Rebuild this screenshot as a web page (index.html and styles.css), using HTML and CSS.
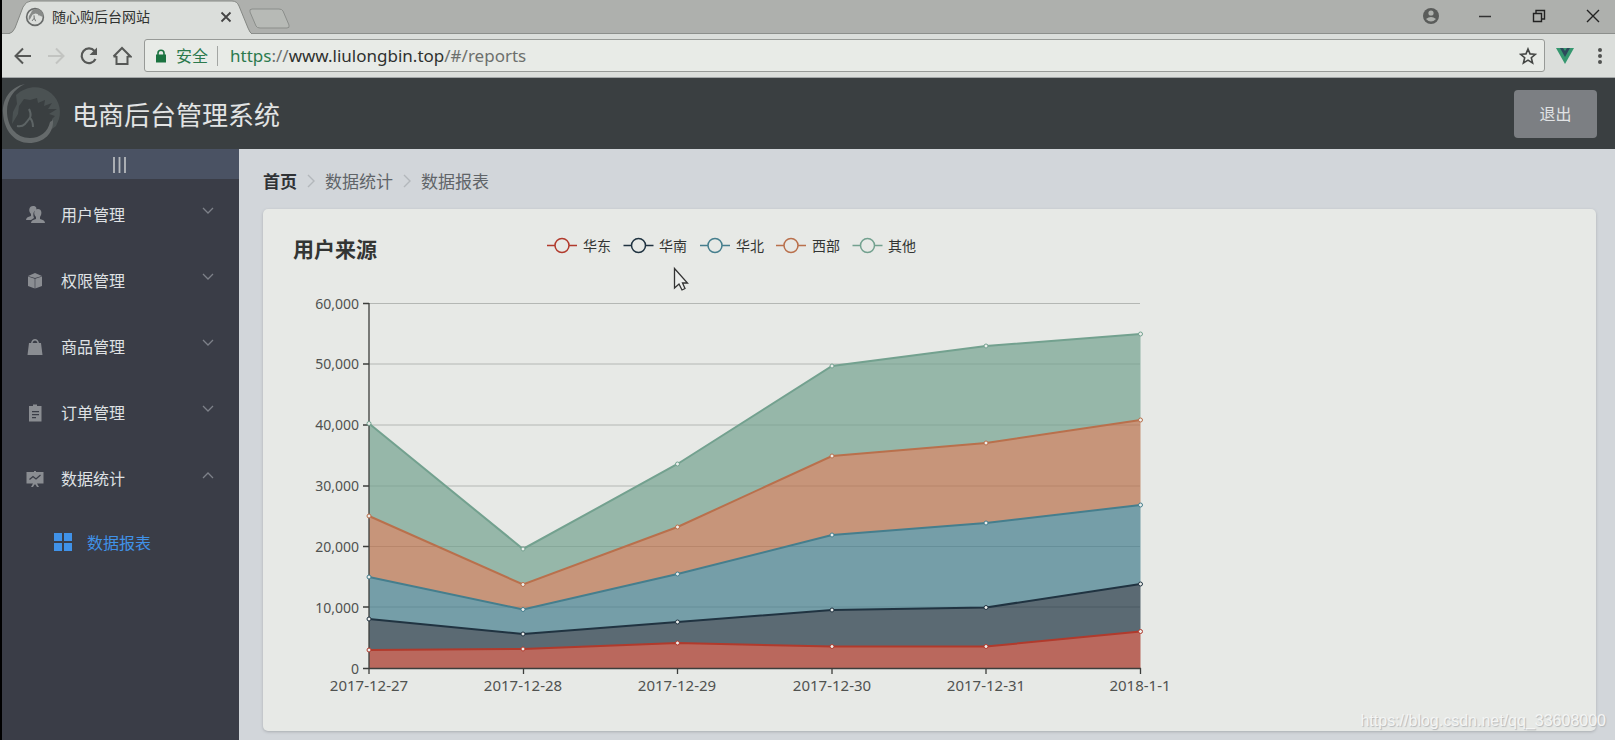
FILE: index.html
```html
<!DOCTYPE html>
<html lang="zh-CN">
<head>
<meta charset="utf-8">
<title>随心购后台网站</title>
<link rel="stylesheet" href="styles.css">
</head>
<body>
<div class="window">
  <div class="tabstrip">
    <div class="tab">
      <svg class="tab-shape" width="244" height="34" viewBox="0 0 244 34" aria-hidden="true"><path d="M0 34 Q5 33 7 28 L15 7 Q18 1 23 1 H224 Q229 1 231 6 L240 28 Q242 33 244 34" fill="#dbdedb" stroke="#858884"/></svg>
      <svg class="favicon" width="20" height="20" viewBox="0 0 60 62" aria-hidden="true"><circle cx="30" cy="31" r="26" fill="none" stroke="#686b6a" stroke-width="5"/><path d="M10 42 L11 29 L18 17 L21 11 C32 2 48 5 54 18 L56 30 L48 29 L44 25 L43 29 L38 22 L31 20 L22 24 L16 36Z" fill="#888b89"/><path d="M27 26 Q31 35 21 43 M28 35 L32 44" fill="none" stroke="#686b6a" stroke-width="3"/></svg>
      <span class="tab-title">随心购后台网站</span>
      <button class="icon-btn" aria-label="关闭标签页"><svg width="12" height="12" viewBox="0 0 12 12"><path d="M1.500 1.500 L10.500 10.500 M10.500 1.500 L1.500 10.500" stroke="#444" stroke-width="1.800"/></svg></button>
    </div>
    <button class="icon-btn new-tab" aria-label="新标签页"><svg width="42" height="22" viewBox="0 0 42 22"><path d="M3 1 H30 Q33 1 34 3 L40 17 Q41 20 38 20 H11 Q8 20 7 18 L1 4 Q0 1 3 1Z" fill="#b7bab6" stroke="#8b8e8b"/></svg></button>
    <div class="window-controls">
      <button class="icon-btn" aria-label="用户"><svg width="18" height="18" viewBox="0 0 18 18"><circle cx="9" cy="9" r="8" fill="#5a5c5a"/><circle cx="9" cy="6" r="2.6" fill="#aeb1ad"/><path d="M4 12 Q9 8 14 12 Q9 17 4 12Z" fill="#aeb1ad"/></svg></button>
      <button class="icon-btn" aria-label="最小化"><svg width="18" height="18" viewBox="0 0 18 18"><path d="M3 9.500 H15" stroke="#333" stroke-width="1.500"/></svg></button>
      <button class="icon-btn" aria-label="还原"><svg width="18" height="18" viewBox="0 0 18 18"><path d="M3.500 6.500 h8 v8 h-8z M6 6 V3.500 h8.500 V12 H12" fill="none" stroke="#222" stroke-width="1.400"/></svg></button>
      <button class="icon-btn" aria-label="关闭"><svg width="18" height="18" viewBox="0 0 18 18"><path d="M3 3 L15 15 M15 3 L3 15" stroke="#222" stroke-width="1.400"/></svg></button>
    </div>
  </div>

  <div class="toolbar">
    <div class="nav-buttons">
      <button class="icon-btn" aria-label="后退"><svg width="20" height="20" viewBox="0 0 20 20"><path d="M18 10 H3 M10 2.500 L2.500 10 L10 17.500" fill="none" stroke="#565856" stroke-width="2"/></svg></button>
      <button class="icon-btn" aria-label="前进"><svg width="20" height="20" viewBox="0 0 20 20"><path d="M2 10 H17 M10 2.500 L17.500 10 L10 17.500" fill="none" stroke="#c2c4c1" stroke-width="2"/></svg></button>
      <button class="icon-btn" aria-label="重新加载"><svg width="20" height="20" viewBox="0 0 20 20"><path d="M16.500 13 A7.300 7.300 0 1 1 15.500 5" fill="none" stroke="#565856" stroke-width="2.200"/><path d="M18 1.500 V9 H10.500Z" fill="#565856"/></svg></button>
      <button class="icon-btn" aria-label="主页"><svg width="20" height="20" viewBox="0 0 20 20"><path d="M4.500 10 V18 H15.500 V10 M1.500 10.500 L10 2 L18.500 10.500 H15.500 M1.500 10.500 H4.500" fill="none" stroke="#565856" stroke-width="2"/></svg></button>
    </div>
    <div class="address">
      <svg width="12" height="14" viewBox="0 0 12 14" aria-hidden="true"><path d="M1 5.500 H11 V13.500 H1Z" fill="#1b7340"/><path d="M3 6 V4 Q3 1.200 6 1.200 Q9 1.200 9 4 V6" fill="none" stroke="#1b7340" stroke-width="1.600"/></svg>
      <span class="secure">安全</span>
      <span class="url"><span class="scheme">https</span><span class="dim">://</span>www.liulongbin.top<span class="dim">/#/reports</span></span>
      <button class="icon-btn" aria-label="收藏"><svg width="18" height="18" viewBox="0 0 18 18"><path d="M9 2 L11 6.900 L16.300 7.300 L12.300 10.700 L13.600 16 L9 13.100 L4.400 16 L5.700 10.700 L1.700 7.300 L7 6.900Z" fill="none" stroke="#444644" stroke-width="1.600"/></svg></button>
    </div>
    <button class="icon-btn" aria-label="Vue"><svg width="20" height="18" viewBox="0 0 20 18"><path d="M1 1 H19 L10 17Z" fill="#35976f"/><path d="M5 1 H8 L10 4 L12 1 H15 L10 10Z" fill="#2e4a5c"/></svg></button>
    <button class="icon-btn menu-btn" aria-label="菜单"><svg width="6" height="18" viewBox="0 0 6 18"><g fill="#505250"><circle cx="3" cy="3" r="2"/><circle cx="3" cy="9" r="2"/><circle cx="3" cy="15" r="2"/></g></svg></button>
  </div>

  <header class="header">
    <svg class="logo" width="60" height="62" viewBox="0 0 60 62" aria-hidden="true">
      <path d="M10 41 L11 29 L15 21 L14 12 C24 3 37 2 46 8 C56 14 60 26 57 36 L54 43 L50 46 L50 36 L53 33 L47 31 L55 26 L46 26 L50 20 L42 23 L43 17 L36 20 L35 15 L28 17 L22 16 L17 23 L16 31Z" fill="#4b5253"/>
      <path d="M23 1 C8 4 0 17 1 30 C2 48 13 60 27 60 C42 60 52 50 51 37 L48 39 C46 49 38 55 28 55 C14 55 5 43 5 28 C5 16 12 6 23 1Z" fill="#656a6b"/>
      <path d="M27 26 C31 34 27 36 23 41 Q20 44 15 43 M28 35 Q31 38 31 44" fill="none" stroke="#5d6465" stroke-width="2"/>
    </svg>
    <h1 class="title">电商后台管理系统</h1>
    <button class="logout">退出</button>
  </header>

  <div class="body">
    <aside class="sidebar">
      <button class="collapse" aria-label="折叠菜单"><svg width="16" height="16" viewBox="0 0 16 16"><path d="M2 0 V16 M7.500 0 V16 M13 0 V16" stroke="#b5b8bc" stroke-width="1.800"/></svg></button>
      <nav class="menu">
        <button class="menu-item">
          <svg class="glyph" width="20" height="18" viewBox="0 0 20 18"><path d="M8 0 C11 0 12 2 11 4 C8 5 8 9 9 12 L6 14 H1 Q1 11 6 10 V8 C3 5 4 0 8 0Z M13 3 C16 3 17 6 16 9 L15 11 V13 Q20 14 20 17 H6 Q6 14 11 13 V11 C8 8 9 3 13 3Z"/></svg>
          <span class="label">用户管理</span>
          <svg class="arrow" width="12" height="8" viewBox="0 0 12 8"><path d="M1 1 L6 6 L11 1"/></svg>
        </button>
        <button class="menu-item">
          <svg class="glyph" width="20" height="18" viewBox="0 0 20 18"><path d="M3 4 L10 1 L17 4 L10 6Z M3 4.500 L9.700 6.700 V16.500 L3 14Z M17 4.500 L10.300 6.700 V16.500 L17 14Z"/></svg>
          <span class="label">权限管理</span>
          <svg class="arrow" width="12" height="8" viewBox="0 0 12 8"><path d="M1 1 L6 6 L11 1"/></svg>
        </button>
        <button class="menu-item">
          <svg class="glyph" width="20" height="18" viewBox="0 0 20 18"><path fill-rule="evenodd" d="M4 5 H6 Q7 1 10 1 Q13 1 14 5 H16 L17.500 17 H2.500Z M7.500 5 H12.500 Q12 2.500 10 2.500 Q8 2.500 7.500 5Z"/></svg>
          <span class="label">商品管理</span>
          <svg class="arrow" width="12" height="8" viewBox="0 0 12 8"><path d="M1 1 L6 6 L11 1"/></svg>
        </button>
        <button class="menu-item">
          <svg class="glyph" width="20" height="18" viewBox="0 0 20 18"><path fill-rule="evenodd" d="M4 2 H8 V0.500 H12 V2 H16.500 V17.500 H4Z M7 7 V8.200 H14 V7Z M7 10 V11.200 H14 V10Z M7 13 V14.200 H11 V13Z"/></svg>
          <span class="label">订单管理</span>
          <svg class="arrow" width="12" height="8" viewBox="0 0 12 8"><path d="M1 1 L6 6 L11 1"/></svg>
        </button>
        <button class="menu-item" aria-expanded="true">
          <svg class="glyph" width="20" height="18" viewBox="0 0 20 18"><path d="M1.500 2 H9 V1 H11 V2 H18.500 V13.500 H12 L14 17 H12 L10.500 14.500 H9.500 L8 17 H6 L8 13.500 H1.500Z"/><path d="M4.500 9.500 L8 6.500 L11 9 L15.500 5" fill="none" stroke="#3a3d47" stroke-width="1.300"/></svg>
          <span class="label">数据统计</span>
          <svg class="arrow" width="12" height="8" viewBox="0 0 12 8"><path d="M1 7 L6 2 L11 7"/></svg>
        </button>
        <a class="submenu-item" href="#/reports">
          <svg width="18" height="18" viewBox="0 0 18 18" aria-hidden="true"><path d="M0 0 H8 V8 H0Z M10 0 H18 V8 H10Z M0 10 H8 V18 H0Z M10 10 H18 V18 H10Z" fill="#4092e8"/></svg>
          <span>数据报表</span>
        </a>
      </nav>
    </aside>

    <main class="main">
      <nav class="breadcrumb" aria-label="面包屑">
        <a class="home" href="#/home">首页</a>
        <svg width="8" height="14" viewBox="0 0 8 14" aria-hidden="true"><path d="M1 1 L7 7 L1 13" fill="none" stroke="#b3b7bb" stroke-width="1.400"/></svg>
        <span>数据统计</span>
        <svg width="8" height="14" viewBox="0 0 8 14" aria-hidden="true"><path d="M1 1 L7 7 L1 13" fill="none" stroke="#b3b7bb" stroke-width="1.400"/></svg>
        <span>数据报表</span>
      </nav>
      <section class="card">
        <svg class="chart" width="900" height="480" viewBox="283 229 900 480" role="img" aria-label="用户来源">
          <text class="chart-title" x="293" y="257">用户来源</text>
          <g class="legend">
            <g class="east"><path d="M547 245.500 H555 M569 245.500 H577"/><circle cx="562" cy="245.500" r="7"/><text x="583" y="251">华东</text></g>
            <g class="south"><path d="M623.500 245.500 H631.500 M645.500 245.500 H653.500"/><circle cx="638.500" cy="245.500" r="7"/><text x="659" y="251">华南</text></g>
            <g class="north"><path d="M700 245.500 H708 M722 245.500 H730"/><circle cx="715" cy="245.500" r="7"/><text x="736" y="251">华北</text></g>
            <g class="west"><path d="M776 245.500 H784 M798 245.500 H806"/><circle cx="791" cy="245.500" r="7"/><text x="812" y="251">西部</text></g>
            <g class="other"><path d="M852.500 245.500 H860.500 M874.500 245.500 H882.500"/><circle cx="867.500" cy="245.500" r="7"/><text x="888" y="251">其他</text></g>
          </g>
          <path class="grid" d="M369 303.500 H1140 M369 364 H1140 M369 425 H1140 M369 486 H1140 M369 546.500 H1140 M369 607 H1140"/>
          <g class="areas">
            <path class="other" d="M369 423.500 L523 549 L677.500 464 L832 366 L986 346 L1140.500 334 V420 L986 443 L832 456 L677.500 527 L523 584.500 L369 516Z"/>
            <path class="west" d="M369 516 L523 584.500 L677.500 527 L832 456 L986 443 L1140.500 420 V505 L986 523 L832 535 L677.500 574 L523 609.500 L369 577Z"/>
            <path class="north" d="M369 577 L523 609.500 L677.500 574 L832 535 L986 523 L1140.500 505 V584 L986 607.500 L832 610 L677.500 622 L523 634 L369 619Z"/>
            <path class="south" d="M369 619 L523 634 L677.500 622 L832 610 L986 607.500 L1140.500 584 V631.500 L986 646.500 L832 646.500 L677.500 643 L523 649 L369 650Z"/>
            <path class="east" d="M369 650 L523 649 L677.500 643 L832 646.500 L986 646.500 L1140.500 631.500 V668.500 H369Z"/>
          </g>
          <path class="axis" d="M369 303 V674 M363 668.500 H1141 M363 303.500 H369 M363 364 H369 M363 425 H369 M363 486 H369 M363 546.500 H369 M363 607 H369 M523.500 668 V674 M677.500 668 V674 M832 668 V674 M986 668 V674 M1140.500 668 V674"/>
          <g class="lines">
            <path class="other" d="M369 423.500 L523 549 L677.500 464 L832 366 L986 346 L1140.500 334"/>
            <path class="west" d="M369 516 L523 584.500 L677.500 527 L832 456 L986 443 L1140.500 420"/>
            <path class="north" d="M369 577 L523 609.500 L677.500 574 L832 535 L986 523 L1140.500 505"/>
            <path class="south" d="M369 619 L523 634 L677.500 622 L832 610 L986 607.500 L1140.500 584"/>
            <path class="east" d="M369 650 L523 649 L677.500 643 L832 646.500 L986 646.500 L1140.500 631.500"/>
          </g>
          <g class="points">
            <g class="other"><circle cx="369" cy="423.500" r="2"/><circle cx="523" cy="549" r="2"/><circle cx="677.500" cy="464" r="2"/><circle cx="832" cy="366" r="2"/><circle cx="986" cy="346" r="2"/><circle cx="1140.500" cy="334" r="2"/></g>
            <g class="west"><circle cx="369" cy="516" r="2"/><circle cx="523" cy="584.500" r="2"/><circle cx="677.500" cy="527" r="2"/><circle cx="832" cy="456" r="2"/><circle cx="986" cy="443" r="2"/><circle cx="1140.500" cy="420" r="2"/></g>
            <g class="north"><circle cx="369" cy="577" r="2"/><circle cx="523" cy="609.500" r="2"/><circle cx="677.500" cy="574" r="2"/><circle cx="832" cy="535" r="2"/><circle cx="986" cy="523" r="2"/><circle cx="1140.500" cy="505" r="2"/></g>
            <g class="south"><circle cx="369" cy="619" r="2"/><circle cx="523" cy="634" r="2"/><circle cx="677.500" cy="622" r="2"/><circle cx="832" cy="610" r="2"/><circle cx="986" cy="607.500" r="2"/><circle cx="1140.500" cy="584" r="2"/></g>
            <g class="east"><circle cx="369" cy="650" r="2"/><circle cx="523" cy="649" r="2"/><circle cx="677.500" cy="643" r="2"/><circle cx="832" cy="646.500" r="2"/><circle cx="986" cy="646.500" r="2"/><circle cx="1140.500" cy="631.500" r="2"/></g>
          </g>
          <g class="y-labels">
            <text x="359" y="309">60,000</text><text x="359" y="369">50,000</text><text x="359" y="430">40,000</text><text x="359" y="491">30,000</text><text x="359" y="552">20,000</text><text x="359" y="613">10,000</text><text x="359" y="674">0</text>
          </g>
          <g class="x-labels">
            <text x="369" y="691">2017-12-27</text><text x="523" y="691">2017-12-28</text><text x="677" y="691">2017-12-29</text><text x="832" y="691">2017-12-30</text><text x="986" y="691">2017-12-31</text><text x="1140" y="691">2018-1-1</text>
          </g>
          <path d="M674.500 268.500 V288 L679 284 L682 290 L685 288.500 L682.500 283 H687.500Z" fill="#eceeec" stroke="#333" stroke-width="1.300"/>
        </svg>
      </section>
      <span class="watermark">https://blog.csdn.net/qq_33608000</span>
    </main>
  </div>
</div>
</body>
</html>
```
FILE: styles.css
```css
* { box-sizing: border-box; }
body {
  margin: 0;
  font-family: "Noto Sans", "Noto Sans CJK SC", sans-serif;
}
button { font: inherit; margin: 0; border: 0; padding: 0; background: none; color: inherit; }
a { color: inherit; text-decoration: none; }
svg { display: block; flex: none; }

.window {
  display: flex;
  flex-direction: column;
  min-height: 100vh;
  border-left: 2px solid #000;
}
.icon-btn { display: flex; align-items: center; justify-content: center; }

/* browser tabs */
.tabstrip {
  display: flex;
  height: 34px;
  background: #aeb0ad;
  border-bottom: 1px solid #8c8f8c;
  padding-left: 6px;
}
.tab {
  position: relative;
  display: flex;
  align-items: center;
  gap: 7px;
  width: 244px;
  height: 34px;
  padding: 0 20px 0 17px;
}
.tab-shape { position: absolute; left: 0; top: 0; }
.favicon, .tab .icon-btn { position: relative; }
.tab-title { position: relative; flex: 1; font-size: 14px; line-height: 20px; color: #303230; }
.new-tab { margin: 4px 0 0 -3px; }
.window-controls {
  display: flex;
  align-items: center;
  gap: 36px;
  margin-left: auto;
  padding: 0 13px 2px 0;
}

/* browser toolbar */
.toolbar {
  display: flex;
  align-items: center;
  gap: 10px;
  height: 44px;
  padding: 0 12px 0 11px;
  background: #dbdedb;
  border-bottom: 1px solid #a3a7a8;
}
.nav-buttons { display: flex; gap: 13px; }
.address {
  flex: 1;
  display: flex;
  align-items: center;
  height: 33px;
  margin-left: 2px;
  padding: 0 7px 0 10px;
  border: 1px solid #979a97;
  border-radius: 3px;
  background: #e8ebe7;
  font-size: 17px;
  line-height: 20px;
}
.secure {
  margin-left: 9px;
  padding-right: 9px;
  border-right: 1px solid #a3a6a3;
  color: #2c7a4e;
  font-size: 16px;
}
.url { flex: 1; margin-left: 12px; color: #2f312f; }
.scheme { color: #2c7a4e; }
.dim { color: #6d706d; }
.menu-btn { margin-left: 12px; }

/* application header */
.header {
  display: flex;
  align-items: center;
  gap: 10px;
  height: 71px;
  padding-right: 18px;
  background: #3a3f41;
}
.title { flex: 1; margin: 0; padding-top: 2px; font-size: 26px; font-weight: 400; line-height: 36px; color: #e2e4e4; }
.logout {
  width: 83px;
  height: 48px;
  padding-bottom: 2px;
  border-radius: 4px;
  background: #7c7f83;
  color: #e0e2e4;
  font-size: 16px;
}

.body { flex: 1; display: flex; }

/* sidebar */
.sidebar { width: 237px; flex: none; background: #3a3d47; }
.collapse {
  display: flex;
  align-items: center;
  justify-content: center;
  width: 100%;
  height: 30px;
  padding: 2px 2px 0 0;
  background: #4a5263;
}
.menu { padding-top: 3px; }
.menu-item {
  display: flex;
  align-items: center;
  width: 100%;
  height: 66px;
  padding: 0 25px 0 23px;
  text-align: left;
}
.glyph { fill: #8a8d92; }
.label { flex: 1; margin-left: 16px; padding-bottom: 2px; font-size: 16px; color: #dfe1e4; }
.arrow { margin-bottom: 8px; fill: none; stroke: #7d8189; stroke-width: 1.3px; }
.submenu-item {
  display: flex;
  align-items: center;
  gap: 15px;
  height: 62px;
  padding: 0 0 2px 52px;
  color: #4092e8;
  font-size: 16px;
}

/* content */
.main {
  position: relative;
  flex: 1;
  min-width: 0;
  display: flex;
  flex-direction: column;
  padding: 0 19px 9px 24px;
  background: #d2d6da;
}
.breadcrumb {
  display: flex;
  align-items: center;
  gap: 10px;
  height: 60px;
  padding-top: 3px;
  font-size: 17px;
  color: #606468;
}
.home { font-weight: 700; color: #303336; }
.card {
  flex: 1;
  padding: 20px;
  border-radius: 5px;
  background: #e7e9e6;
  box-shadow: 0 1px 3px #a9adb1;
}
.watermark {
  position: absolute;
  right: 9px;
  bottom: 10px;
  font: 16px/18px "Liberation Sans", Arial, sans-serif;
  color: #f4f5f4;
  text-shadow: 1px 1px 1px #b4b7b9;
}

/* chart */
.east { --series: #b13a2c; }
.south { --series: #203341; }
.north { --series: #457e8d; }
.west { --series: #b9704c; }
.other { --series: #73a18f; }
.chart-title { font-size: 21px; font-weight: 700; fill: #333533; }
.legend { fill: none; stroke-width: 1.5px; }
.legend path, .legend circle { stroke: var(--series); }
.legend text { fill: #333533; font-size: 14px; }
.grid { stroke: #b4b7b4; stroke-width: 1px; }
.areas path { fill: var(--series); fill-opacity: 0.7; }
.areas .east { fill: #a63022; }
.axis { fill: none; stroke: #3c3e3c; stroke-width: 1.3px; }
.lines path { fill: none; stroke: var(--series); stroke-width: 2px; }
.points circle { fill: #eceeec; stroke: var(--series); stroke-width: 1px; }
.y-labels { font-size: 14px; text-anchor: end; fill: #505250; }
.x-labels { font-size: 15px; text-anchor: middle; fill: #505250; }
```
